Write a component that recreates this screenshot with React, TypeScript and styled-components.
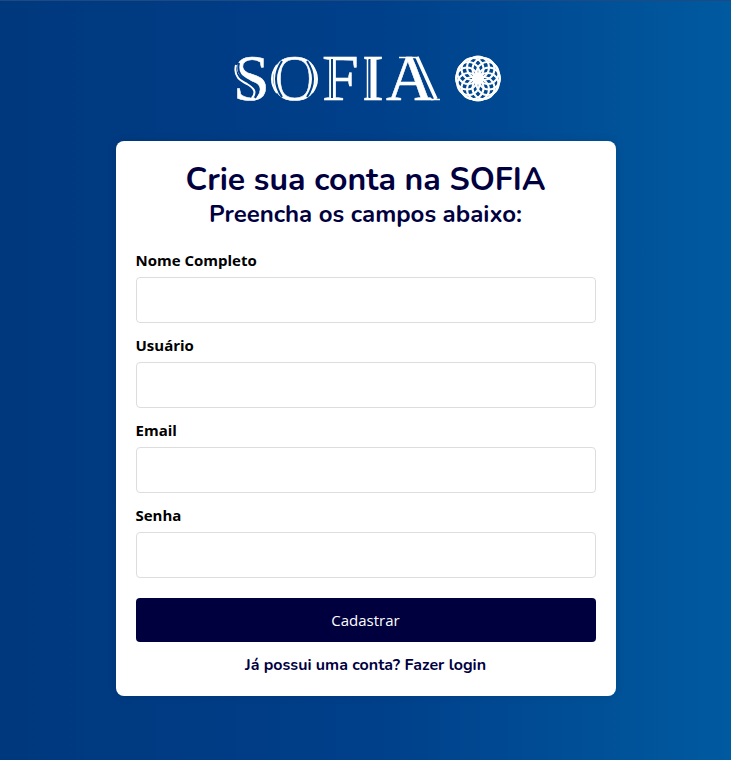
import React from "react";
import styled, { createGlobalStyle } from "styled-components";

const GlobalStyle = createGlobalStyle`
  * { box-sizing: border-box; }
  body {
    margin: 0;
    font-family: "Open Sans", "Noto Sans", sans-serif;
  }
`;

const Page = styled.div`
  min-height: 100vh;
  display: flex;
  flex-direction: column;
  align-items: center;
  padding: 38px 20px 64px;
  border-top: 1px solid #1d4a80;
  background: linear-gradient(to right, #00387d, #003f8a 50%, #005a9f);
`;

const Logo = styled.svg`
  display: block;
  width: 270px;
  height: 80px;
  margin-bottom: 22px;
`;

const Card = styled.main`
  width: 100%;
  max-width: 500px;
  padding: 20px;
  border-radius: 8px;
  background: #fff;
  box-shadow: 0 0 10px rgba(0, 0, 0, 0.1);
`;

const Title = styled.h1`
  margin: 0;
  color: #00003f;
  font-family: Nunito, "Open Sans", sans-serif;
  font-size: 32px;
  font-weight: 700;
  line-height: 37px;
  text-align: center;
`;

const Subtitle = styled.h2`
  margin: 0 0 20px;
  color: #00003f;
  font-family: Nunito, "Open Sans", sans-serif;
  font-size: 24px;
  font-weight: 700;
  line-height: 32px;
  text-align: center;
`;

const Form = styled.form`
  display: flex;
  flex-direction: column;
  gap: 12px;
`;

const Field = styled.div`
  display: flex;
  flex-direction: column;
  gap: 6px;
`;

const Label = styled.label`
  color: #000;
  font-size: 15px;
  font-weight: 700;
  line-height: 21px;
`;

const Input = styled.input`
  width: 100%;
  height: 46px;
  padding: 10px;
  border: 1px solid #ddd;
  border-radius: 4px;
  background: #fff;
  font: inherit;
`;

const Submit = styled.button`
  height: 44px;
  margin-top: 8px;
  border: 0;
  border-radius: 4px;
  background: #00003f;
  color: #fff;
  font-family: inherit;
  font-size: 15px;
  cursor: pointer;
`;

const LoginLink = styled.a`
  display: block;
  margin-top: 12px;
  color: #00003f;
  font-family: Nunito, "Open Sans", sans-serif;
  font-size: 16px;
  font-weight: 700;
  line-height: 22px;
  text-align: center;
  text-decoration: none;
`;

const petals = Array.from({ length: 12 }, (_, i) => i * 30);

function SofiaLogo() {
  return (
    <Logo viewBox="0 -14 270 80" role="img" aria-label="SOFIA">
      <text
        x="2 40 91 131 155"
        y="47"
        fill="#fff"
        stroke="#fff"
        strokeWidth="0.5"
        fontFamily="'Liberation Serif', serif"
        fontSize="66"
      >
        SOFIA
      </text>
      <g fill="none" stroke="#003f89" strokeWidth="2">
        <path d="M8 10C5 22 13 25 19 28.500C27 33 29 38 24 45" />
        <path d="M51 8Q39 26 51 44M76 8Q88 26 76 44" />
        <path d="M101 6V45M138.500 6V45M182 3L202 46" />
      </g>
      <g fill="none" stroke="#fff" strokeWidth="2">
        <path d="M5 12C2 24 10 28 16 31C23 35 26 39 21 45" />
        <path d="M46 12Q36 26 46 40M81 12Q91 26 81 40" />
        <path d="M136.500 4V46" strokeWidth="1.500" />
        <path d="M168 4.500H187" strokeWidth="1.500" />
        <path d="M186 4L205 46" strokeWidth="3.500" />
        <path d="M200 46.500H209" strokeWidth="1.500" />
      </g>
      <g fill="none" stroke="#fff" strokeWidth="2">
        <circle cx="247" cy="25.500" r="21.500" />
        {petals.map((angle) => (
          <circle key={angle} cx="247" cy="14.500" r="11" transform={`rotate(${angle} 247 25.500)`} />
        ))}
      </g>
      <circle cx="247" cy="25.500" r="6" fill="#fff" />
    </Logo>
  );
}

const fields = [
  { id: "nome", label: "Nome Completo", type: "text" },
  { id: "usuario", label: "Usuário", type: "text" },
  { id: "email", label: "Email", type: "email" },
  { id: "senha", label: "Senha", type: "password" },
];

export default function App() {
  return (
    <>
      <GlobalStyle />
      <Page>
        <SofiaLogo />
        <Card>
          <Title>Crie sua conta na SOFIA</Title>
          <Subtitle>Preencha os campos abaixo:</Subtitle>
          <Form>
            {fields.map(({ id, label, type }) => (
              <Field key={id}>
                <Label htmlFor={id}>{label}</Label>
                <Input id={id} name={id} type={type} />
              </Field>
            ))}
            <Submit type="submit">Cadastrar</Submit>
          </Form>
          <LoginLink href="#login">Já possui uma conta? Fazer login</LoginLink>
        </Card>
      </Page>
    </>
  );
}
